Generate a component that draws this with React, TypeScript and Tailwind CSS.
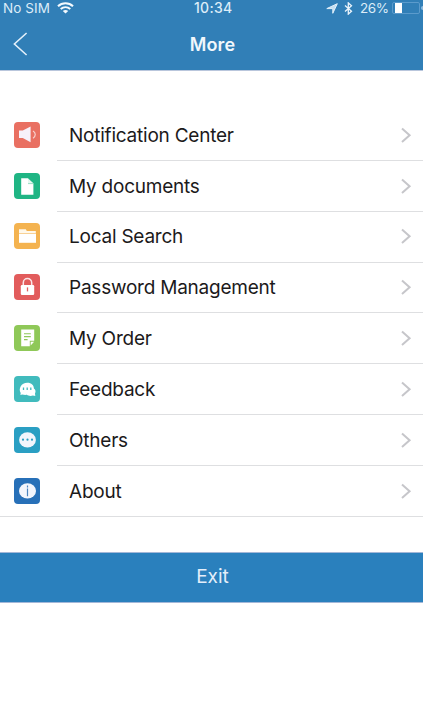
import type { ReactNode } from "react";

type MenuItem = {
  label: string;
  color: string;
  icon: ReactNode;
};

const items: MenuItem[] = [
  {
    label: "Notification Center",
    color: "bg-[#e97062]",
    icon: (
      <>
        <path d="M5 8.6h3.8L16.6 4.6v15.6l-7.8-4.2H5z" fill="#f7f1fa" />
        <path d="M19 9c3 1.6 3 5.6 0 7.2" stroke="#f7d3d0" strokeWidth="1.2" fill="none" />
      </>
    ),
  },
  {
    label: "My documents",
    color: "bg-[#1fb584]",
    icon: (
      <>
        <path d="M7.2 5.2h6.8v5h5.4v11.6H7.2z" fill="#fff" />
        <path d="M14 5.2l5.4 5H14z" fill="#e6f7f0" />
        <path d="M14 10.6h5.2" stroke="#8fdabf" strokeWidth="0.8" />
      </>
    ),
  },
  {
    label: "Local Search",
    color: "bg-[#f4b350]",
    icon: (
      <>
        <path d="M5 6.2h6.8l1 1.8h9v2H5z" fill="#fff8ea" />
        <path d="M5 10.6h17v9.2H5z" fill="#fff" />
      </>
    ),
  },
  {
    label: "Password Management",
    color: "bg-[#e25c5c]",
    icon: (
      <>
        <path d="M9.3 12V8.8a4.2 4.2 0 0 1 8.4 0V12" stroke="#fbe6e8" strokeWidth="1.5" fill="none" />
        <rect x="6.8" y="11" width="13.4" height="10" rx="1.2" fill="#fff" />
        <path d="M13.5 13.4v4" stroke="#e25c5c" strokeWidth="1.3" />
      </>
    ),
  },
  {
    label: "My Order",
    color: "bg-[#8fc858]",
    icon: (
      <>
        <path d="M7.2 4.5h13v11.3h-4.4v5.4H7.2z" fill="#fff" />
        <path d="M10 8.8h6.8M10 11.6h6.8M10 14.6h3.6" stroke="#8fc858" strokeWidth="1.1" />
        <path d="M16.7 20.4v-3.6h3.4z" fill="#fff" />
      </>
    ),
  },
  {
    label: "Feedback",
    color: "bg-[#41bbbd]",
    icon: (
      <>
        <path
          d="M13.3 6.7c4.2 0 6.6 2.7 6.6 5.8 1.8 1.2 2.1 3.2 1.1 4.9l.3 2.6-2.4-.4c-2.5.7-5 .1-6-.8-1.8.3-3.4 0-4.7-.3l-1.8.6.3-2.2c-2.6-4.2.6-10.2 6.6-10.2z"
          fill="#fff"
        />
        <path d="M9.5 11.5v2.6M13.2 11.5v2.6M16.8 11.5v2.6" stroke="#41bbbd" strokeWidth="1.3" />
      </>
    ),
  },
  {
    label: "Others",
    color: "bg-[#2a9fc3]",
    icon: (
      <>
        <ellipse cx="13.5" cy="12.9" rx="8.4" ry="7.6" fill="#f2f5fc" />
        <g fill="#2a9fc3">
          <circle cx="9" cy="12.7" r="1.1" />
          <circle cx="13.5" cy="12.7" r="1.1" />
          <circle cx="18" cy="12.7" r="1.1" />
        </g>
      </>
    ),
  },
  {
    label: "About",
    color: "bg-[#2770b8]",
    icon: (
      <>
        <ellipse cx="13.5" cy="12.9" rx="8.5" ry="7.7" fill="#f2f5fc" />
        <path d="M13.5 7.4v2M13.5 10.5v7.7" stroke="#4a84c0" strokeWidth="1.2" />
      </>
    ),
  },
];

function StatusBar() {
  return (
    <div className="relative flex h-4 items-center justify-between pl-[3px] text-[13.5px] leading-4 text-[#dcecf8]">
      <div className="flex items-center gap-[7px]">
        <span className="tracking-[0.1px]">No SIM</span>
        <svg width="17" height="12" viewBox="0 0 17 12" fill="none" stroke="#f4fafe">
          <path d="M1 4.2C5.2.3 11.8.3 16 4.2" strokeWidth="2.1" />
          <path d="M3.7 7c2.8-2.4 6.8-2.4 9.6 0" strokeWidth="2" />
          <path d="M8.5 11.6L5.8 9c1.5-1.3 3.9-1.3 5.4 0z" fill="#f4fafe" stroke="none" />
        </svg>
      </div>
      <span className="absolute left-[194px] top-0 text-[14px] font-medium tracking-[0.3px]">10:34</span>
      <div className="flex items-center">
        <svg className="mr-[6px]" width="12" height="11" viewBox="0 0 12 11">
          <path d="M11.3.7L6.8 10.3V5.6H.8z" fill="#c4dff2" stroke="#e0effa" strokeWidth="1" />
        </svg>
        <svg className="mr-[7px]" width="9" height="13" viewBox="0 0 9 13" fill="none" stroke="#eaf4fb" strokeWidth="1.3">
          <path d="M1 3.5l6.5 5.7-3.2 2.9V.9l3.2 2.9L1 9.5" />
        </svg>
        <span className="mr-1 w-[28px] whitespace-nowrap tracking-[-0.4px]">26%</span>
        <div className="h-3 w-[28px] rounded-[2px] border border-[#5b9bcc] pl-[2px]">
          <div className="h-full w-[7px] bg-white" />
        </div>
        <div className="ml-px h-1 w-[2px] rounded-l-sm bg-[#8dbbdf]" />
      </div>
    </div>
  );
}

function MenuRow({ item, last }: { item: MenuItem; last: boolean }) {
  return (
    <li className="relative flex h-[50.86px] items-center pb-[1.5px] pl-[14px]">
      <span className={`size-[26px] shrink-0 rounded-[4px] ${item.color}`}>
        <svg width="26" height="26" viewBox="0 0 26 26">{item.icon}</svg>
      </span>
      <span className="ml-[29px] grow pt-[2px] text-[19px] leading-6 tracking-[-0.23px] text-[#1c1a1b]">{item.label}</span>
      <svg className="mr-[11px]" width="11" height="16" viewBox="0 0 11 16" fill="none" stroke="#c6c6ca" strokeWidth="2">
        <path d="M1 1.5L8.6 8.2 1 15" />
      </svg>
      <span className={`absolute bottom-0 right-0 h-px bg-[#dedfe1] ${last ? "left-0" : "left-[57px]"}`} />
    </li>
  );
}

export default function App() {
  return (
    <div className="h-[723px] w-[423px] overflow-hidden bg-white font-['Inter','Liberation_Sans',sans-serif]">
      <header className="h-[71px] border-b border-[#b9c6dc] bg-[#317fb7]">
        <StatusBar />
        <div className="relative flex h-[54px] items-center justify-center pl-[2px] pt-[3px]">
          <svg className="absolute left-[13px] top-[16px]" width="15" height="24" viewBox="0 0 15 24" fill="none" stroke="#e3f0fa" strokeWidth="1.6">
            <path d="M13.6 1L1.4 12l12.2 11" />
          </svg>
          <h1 className="text-[18px] font-semibold leading-6 tracking-[0.1px] text-[#f1f7fc]">More</h1>
        </div>
      </header>

      <ul className="mt-[39px]">
        {items.map((item, i) => (
          <MenuRow key={item.label} item={item} last={i === items.length - 1} />
        ))}
      </ul>

      <button className="mt-[35px] block h-[51px] w-full border-y border-[#a3b7d8] bg-[#2a80bd] pl-[2px] text-[19px] leading-6 text-[#e3eefa]">
        Exit
      </button>
    </div>
  );
}
